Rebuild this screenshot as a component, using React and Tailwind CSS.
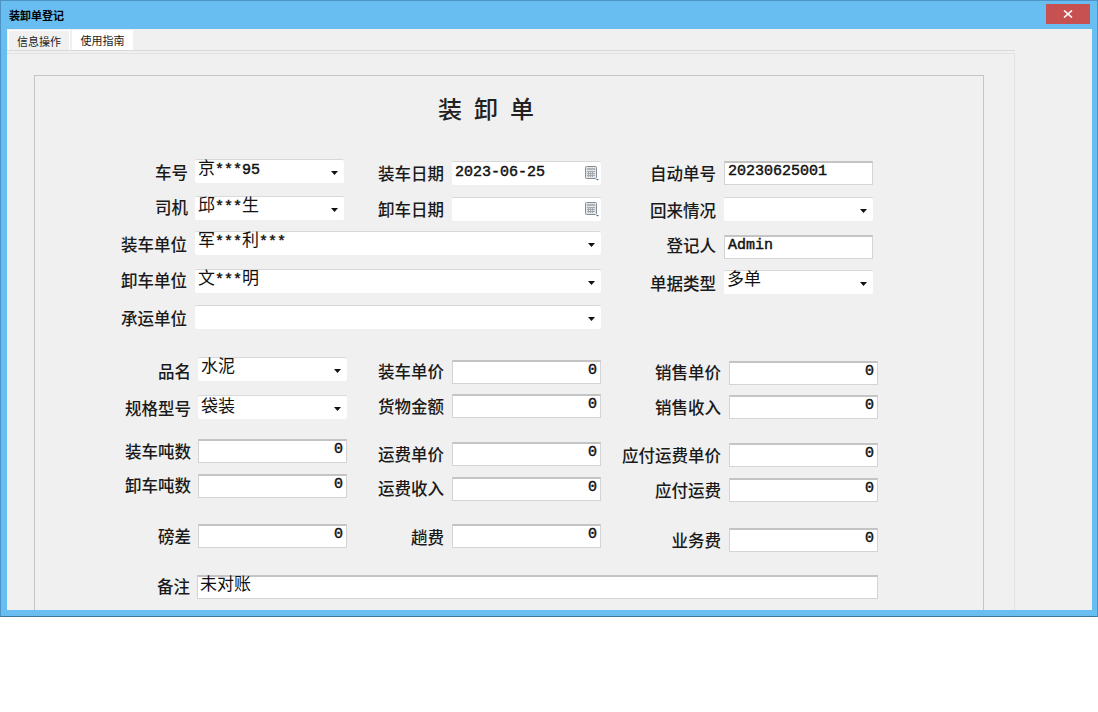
const cjkFont = '[font-family:"Noto_Sans_CJK_SC",sans-serif]';

// digits and stars run in a mono face at 15px, chinese chars are wider at 18px
function Value({ text, className = '' }) {
  const parts = text.split(/([\u4e00-\u9fff]+)/).filter(Boolean);
  return (
    <span className={`${className} font-['Liberation_Mono','Noto_Sans_CJK_SC',monospace] text-[15px] text-[#111] [-webkit-text-stroke:0.45px_#111] whitespace-pre leading-[20px]`}>
      {parts.map((p, i) =>
        /[\u4e00-\u9fff]/.test(p) ? (
          <span key={i} className="text-[17px] [-webkit-text-stroke:0px]">{p}</span>
        ) : (
          <span key={i}>{p}</span>
        )
      )}
    </span>
  );
}

function Arrow() {
  return (
    <svg width="7" height="4" viewBox="0 0 7 4" className="shrink-0">
      <path d="M0 0h7L3.5 4z" fill="#111" />
    </svg>
  );
}

function CalendarIcon() {
  return (
    <svg width="15" height="15" viewBox="0 0 15 15" className="shrink-0">
      <rect x="0.5" y="0.5" width="11" height="12" rx="1" fill="#e4e6ea" stroke="#858d95" />
      <rect x="2" y="2" width="8" height="2" fill="#aeb4ba" />
      <path d="M2 5.5h8M2 7.5h8M2 9.5h8M3.5 5v6M5.5 5v6M7.5 5v6" stroke="#a4a9af" strokeWidth="1" />
      <path d="M11 13h3l-1.5 1.5z" fill="#3a6ea5" />
    </svg>
  );
}

function Combo({ value = '', className = 'w-[149px]', textClass = '' }) {
  return (
    <div className={`${className} h-[24px] shrink-0 bg-white border-t border-[#d8d8d8] rounded-[2px] flex items-start justify-between pl-[3px] pr-[6px]`}>
      <Value text={value} className={textClass} />
      <span className="mt-[11px]"><Arrow /></span>
    </div>
  );
}

function DateBox({ value = '' }) {
  return (
    <div className="w-[149px] h-[24px] shrink-0 bg-white border-t border-[#d8d8d8] rounded-[2px] flex items-start justify-between pl-[3px] pr-[1px]">
      <Value text={value} className="mt-[1px]" />
      <span className="mt-[4px]"><CalendarIcon /></span>
    </div>
  );
}

function TextBox({ value = '', right = false, className = 'w-[149px]', textClass = '-mt-[1px]' }) {
  return (
    <div className={`${className} h-[24px] shrink-0 bg-white border-t-2 border-l border-r border-b border-t-[#c4c4c4] border-l-[#d4d4d4] border-r-[#d4d4d4] border-b-[#d4d4d4] flex items-start px-[3px] ${right ? 'justify-end' : ''}`}>
      <Value text={value} className={textClass} />
    </div>
  );
}

function Label({ text, className }) {
  return (
    <div className={`${className} shrink-0 text-right ${cjkFont} text-[16.5px] font-medium text-[#1a1a1a] leading-[24px] whitespace-nowrap`}>
      {text}
    </div>
  );
}

const left1 = 'w-[153px] mr-[7px]';
const wide1 = 'w-[152px] mr-[8px]';
const mid1 = 'w-[100px] mr-[8px]';
const right1 = 'w-[115px] mr-[8px]';
const left2 = 'w-[156px] mr-[7px]';
const mid2 = 'w-[97px] mr-[8px]';
const right2 = 'w-[120px] mr-[8px]';

export default function App() {
  return (
    <div className="w-[1098px] h-[712px] bg-white overflow-hidden">
      <div className="w-full h-[617px] flex flex-col bg-[#68bdf1] border border-[#4d94c4] border-b-[#3e7598]">
        {/* title bar */}
        <div className="h-[28px] shrink-0 flex items-start justify-between pl-[8px] pr-[7px]">
          <span className={`${cjkFont} mt-[7px] text-[11px] font-bold leading-[14px] text-black`}>装卸单登记</span>
          <div className="mt-[3px] w-[44px] h-[20px] bg-[#c75050] flex items-center justify-center">
            <svg width="10" height="8" viewBox="0 0 10 8">
              <path d="M1 0.5l8 7M9 0.5l-8 7" stroke="#fff" strokeWidth="1.6" />
            </svg>
          </div>
        </div>

        {/* client area */}
        <div className="ml-[6px] mr-[5px] mb-[6px] flex-1 min-h-0 bg-[#f0f0f0] overflow-hidden">
          <div className="w-[1008px] h-full flex flex-col">
            <div className="h-[22px] shrink-0 flex items-end gap-[2px] pl-[1px] border-b border-[#d9d9d9]">
              <div className={`w-[62px] h-[20px] bg-[#f0f0f0] border-t border-l border-r border-white text-center ${cjkFont} text-[11px] leading-[20px] text-[#222]`}>信息操作</div>
              <div className={`w-[61px] h-[20px] bg-white text-center ${cjkFont} text-[11px] leading-[20px] text-[#222]`}>使用指南</div>
            </div>
            <div className="flex-1 min-h-0 mt-[2px] border-t border-r border-[#e2e2e2] pl-[27px] pt-[21px]">
              <div className="h-full w-[950px] border-t border-l border-r border-[#c6c6c6] flex flex-col overflow-hidden">
                <div className={`${cjkFont} mt-[15px] h-[34px] pl-[403px] text-[24px] font-medium leading-[34px] tracking-[12px] text-[#222]`}>
                  装卸单
                </div>

                {/* first block */}
                <div className="mt-[34px] h-[37px] shrink-0 flex items-start">
                  <Label text="车号" className={`${left1} mt-[1px]`} />
                  <Combo value="京***95" />
                  <Label text="装车日期" className={`${mid1} mt-[2px]`} />
                  <div className="mt-[2px]"><DateBox value="2023-06-25" /></div>
                  <Label text="自动单号" className={`${right1} mt-[2px]`} />
                  <div className="mt-[2px]"><TextBox value="20230625001" /></div>
                </div>
                <div className="h-[35px] shrink-0 flex items-start">
                  <Label text="司机" className={`${left1} -mt-[1px]`} />
                  <Combo value="邱***生" />
                  <Label text="卸车日期" className={`${mid1} mt-[1px]`} />
                  <div className="mt-[1px]"><DateBox /></div>
                  <Label text="回来情况" className={`${right1} mt-[2px]`} />
                  <div className="mt-[1px]"><Combo /></div>
                </div>
                <div className="h-[38px] shrink-0 flex items-start">
                  <Label text="装车单位" className={`${wide1} mt-[1px]`} />
                  <Combo value="军***利***" className="w-[406px]" />
                  <Label text="登记人" className={`${right1} mt-[2px]`} />
                  <div className="mt-[4px]"><TextBox value="Admin" /></div>
                </div>
                <div className="h-[36px] shrink-0 flex items-start">
                  <Label text="卸车单位" className={`${wide1} -mt-[1px]`} />
                  <Combo value="文***明" className="w-[406px]" />
                  <Label text="单据类型" className={`${right1} mt-[2px]`} />
                  <div className="mt-[1px]"><Combo value="多单" /></div>
                </div>
                <div className="h-[52px] shrink-0 flex items-start">
                  <Label text="承运单位" className={`${wide1} mt-[1px]`} />
                  <Combo className="w-[406px]" />
                </div>

                {/* second block */}
                <div className="h-[37px] shrink-0 flex items-start">
                  <Label text="品名" className={`${left2} mt-[2px]`} />
                  <Combo value="水泥" />
                  <Label text="装车单价" className={`${mid2} mt-[2px]`} />
                  <div className="mt-[3px]"><TextBox value="0" right /></div>
                  <Label text="销售单价" className={`${right2} mt-[3px]`} />
                  <div className="mt-[4px]"><TextBox value="0" right /></div>
                </div>
                <div className="h-[45px] shrink-0 flex items-start">
                  <Label text="规格型号" className={`${left2} mt-[2px]`} />
                  <div className="mt-[1px]"><Combo value="袋装" textClass="mt-[2px]" /></div>
                  <Label text="货物金额" className={mid2} />
                  <TextBox value="0" right />
                  <Label text="销售收入" className={`${right2} mt-[1px]`} />
                  <div className="mt-[1px]"><TextBox value="0" right /></div>
                </div>
                <div className="h-[35px] shrink-0 flex items-start">
                  <Label text="装车吨数" className={left2} />
                  <TextBox value="0" right />
                  <Label text="运费单价" className={`${mid2} mt-[3px]`} />
                  <div className="mt-[3px]"><TextBox value="0" right /></div>
                  <Label text="应付运费单价" className={`${right2} mt-[4px]`} />
                  <div className="mt-[4px]"><TextBox value="0" right /></div>
                </div>
                <div className="h-[50px] shrink-0 flex items-start">
                  <Label text="卸车吨数" className={`${left2} -mt-[1px]`} />
                  <TextBox value="0" right />
                  <Label text="运费收入" className={`${mid2} mt-[2px]`} />
                  <div className="mt-[3px]"><TextBox value="0" right /></div>
                  <Label text="应付运费" className={`${right2} mt-[4px]`} />
                  <div className="mt-[4px]"><TextBox value="0" right /></div>
                </div>
                <div className="h-[51px] shrink-0 flex items-start">
                  <Label text="磅差" className={left2} />
                  <TextBox value="0" right />
                  <Label text="趟费" className={`${mid2} mt-[1px]`} />
                  <TextBox value="0" right />
                  <Label text="业务费" className={`${right2} mt-[4px]`} />
                  <div className="mt-[4px]"><TextBox value="0" right /></div>
                </div>
                <div className="h-[24px] shrink-0 flex items-start">
                  <Label text="备注" className="w-[155px] mr-[7px] -mt-[1px]" />
                  <TextBox value="未对账" className="w-[681px]" textClass="-mt-[1px] -ml-[1px]" />
                </div>
              </div>
            </div>
          </div>
        </div>
      </div>
    </div>
  );
}
